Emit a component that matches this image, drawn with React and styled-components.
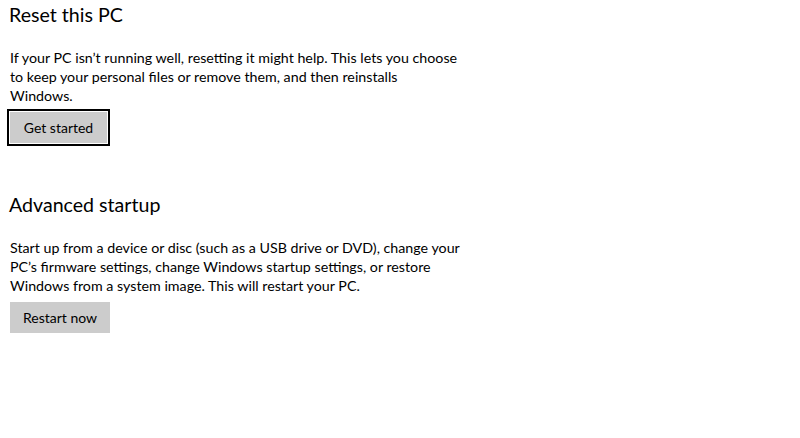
import React from "react";
import styled, { createGlobalStyle } from "styled-components";

const Global = createGlobalStyle`
  html, body { margin: 0; padding: 0; background: #fff; }
  body { font-family: "Segoe UI", Lato, sans-serif; color: #000; }
`;

const Page = styled.div`
  width: 800px;
  height: 438px;
  box-sizing: border-box;
  padding: 1px 0 0 10px;
  display: flex;
  flex-direction: column;
  gap: 48px;
`;

const Section = styled.section`
  display: flex;
  flex-direction: column;
  align-items: flex-start;
`;

const Title = styled.h2`
  margin: 0 0 0 -1px;
  font-size: 19.6px;
  line-height: 28px;
  font-weight: 400;
`;

const Para = styled.p`
  margin: 19px 0 7px;
  width: 480px;
  font-size: 14.25px;
  line-height: 19px;
`;

const Button = styled.button`
  width: ${(p) => p.$w}px;
  height: 31px;
  padding: 0;
  border: none;
  background: #cccccc;
  color: #000;
  font-family: inherit;
  font-size: 14px;
  box-shadow: ${(p) => (p.$focused ? "0 0 0 1px #fff, 0 0 0 3px #000" : "none")};
`;

export default function App() {
  return (
    <>
      <Global />
      <Page>
        <Section>
          <Title>Reset this PC</Title>
          <Para>
            If your PC isn’t running well, resetting it might help. This lets you choose
            <br />
            to keep your personal files or remove them, and then reinstalls
            <br />
            Windows.
          </Para>
          <Button $w={97} $focused>Get started</Button>
        </Section>
        <Section>
          <Title>Advanced startup</Title>
          <Para>
            Start up from a device or disc (such as a USB drive or DVD), change your
            <br />
            PC’s firmware settings, change Windows startup settings, or restore
            <br />
            Windows from a system image. This will restart your PC.
          </Para>
          <Button $w={100}>Restart now</Button>
        </Section>
      </Page>
    </>
  );
}
